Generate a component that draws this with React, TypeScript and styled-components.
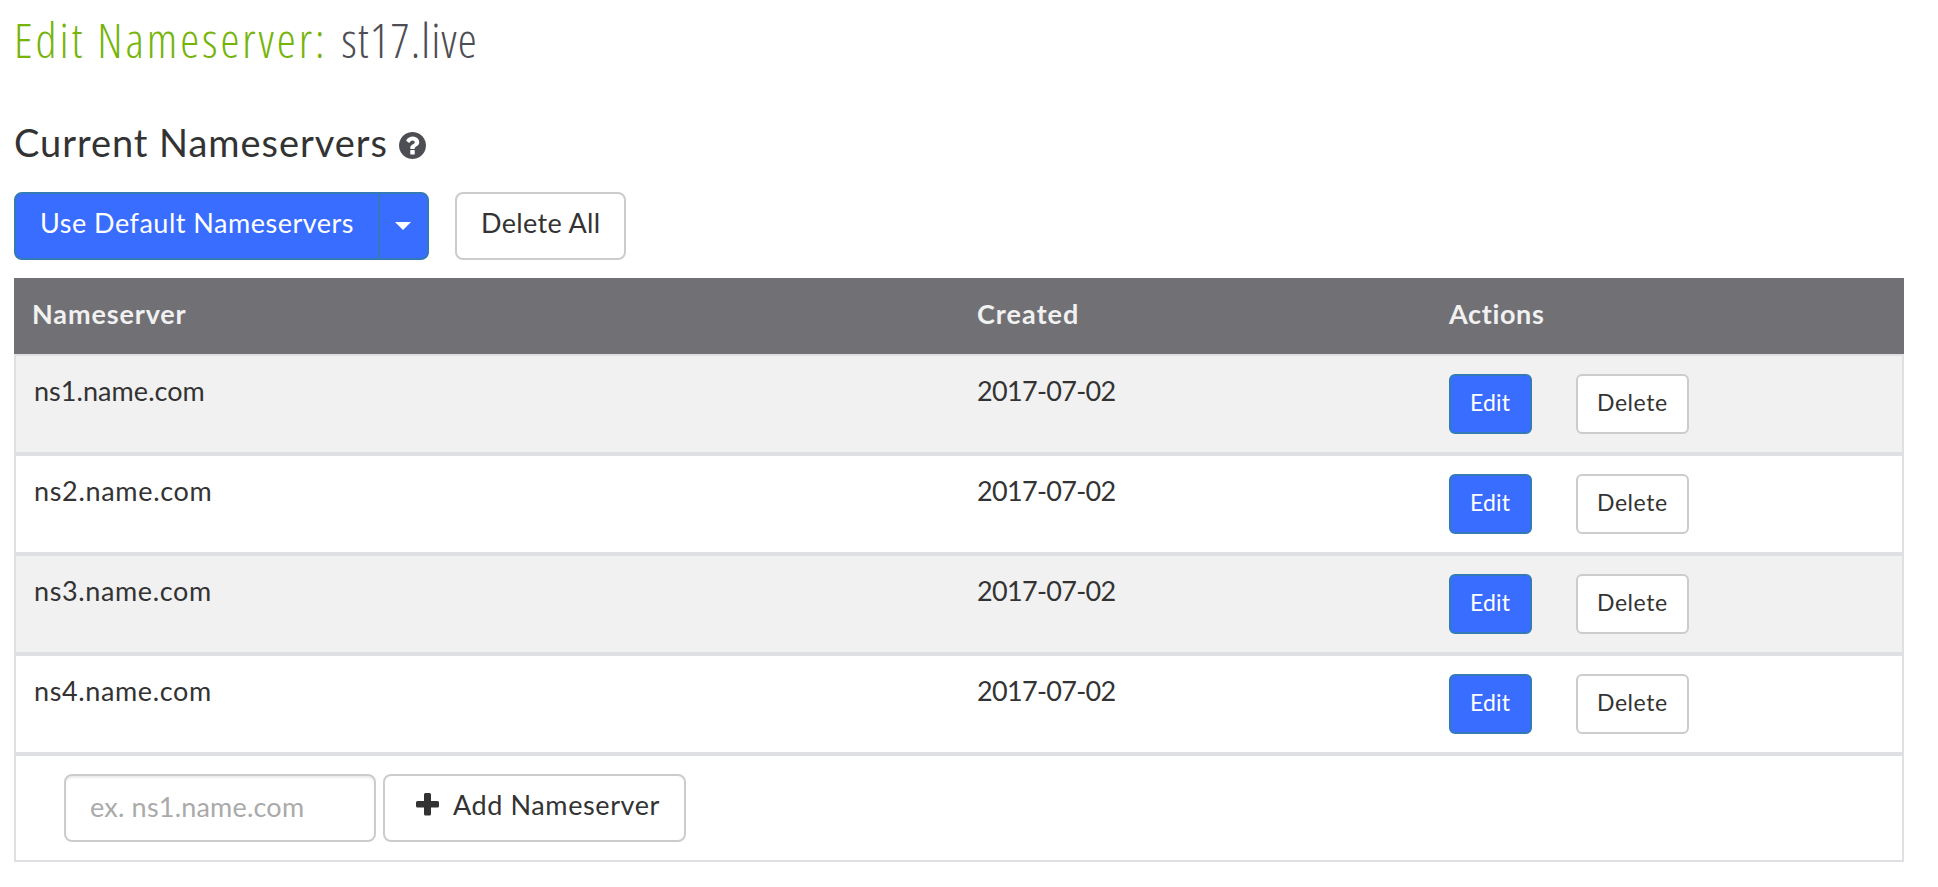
import React from 'react';
import styled, { createGlobalStyle } from 'styled-components';

const GlobalStyle = createGlobalStyle`
  *, *::before, *::after { box-sizing: border-box; }
  body {
    margin: 0;
    background: #fff;
    color: #333;
    font-family: Lato, "Liberation Sans", sans-serif;
    font-size: 27px;
    line-height: 40px;
  }
`;

const Page = styled.main`
  padding: 6px 34px 25px 14px;
`;

const Title = styled.h1`
  margin: 0;
  display: flex;
  gap: 14px;
  font-family: "Open Sans", "Liberation Sans", sans-serif;
  font-size: 48px;
  font-weight: 300;
  font-stretch: 75%;
  line-height: 68px;
  letter-spacing: 2.9px;
  color: #76b40a;
  white-space: nowrap;
`;

const Domain = styled.span`
  color: #4d4d54;
  letter-spacing: 1px;
`;

const Heading = styled.h2`
  margin: 43px 0 0;
  display: flex;
  gap: 11px;
  font-size: 38px;
  font-weight: 400;
  line-height: 50px;
  letter-spacing: 0.95px;
`;

const HelpIcon = styled.svg`
  width: 27px;
  height: 27px;
  margin-top: 15px;
  fill: #4d4d54;
`;

const Toolbar = styled.div`
  display: flex;
  margin: 25px 0 18px;
`;

const SplitButton = styled.div`
  display: flex;
  margin-right: 26px;
`;

const Button = styled.button<{ $primary?: boolean; $tracking?: number }>`
  display: flex;
  height: 68px;
  padding: 9px 25px 0;
  border: 2px solid ${p => (p.$primary ? '#337ab7' : '#ccc')};
  border-radius: 8px;
  background: ${p => (p.$primary ? '#396dff' : '#fff')};
  color: ${p => (p.$primary ? '#fff' : '#333')};
  font: inherit;
  letter-spacing: ${p => p.$tracking ?? 0}px;
  white-space: nowrap;
`;

const MainAction = styled(Button)`
  width: 366px;
  padding-left: 24px;
  border-radius: 8px 0 0 8px;
`;

const MenuToggle = styled(Button)`
  width: 51px;
  margin-left: -2px;
  padding: 28px 0 0 15px;
  border-radius: 0 8px 8px 0;
`;

const DeleteAll = styled(Button)`
  width: 171px;
  padding: 9px 0 0 24px;
`;

const Caret = styled.span`
  border: 8px solid transparent;
  border-top-color: #fff;
  border-bottom: 0;
`;

const SmallButton = styled(Button)<{ $width: number }>`
  width: ${p => p.$width}px;
  height: 60px;
  padding: 10px 0 0 19px;
  border-radius: 6px;
  font-size: 23px;
  line-height: 32px;
`;

const Table = styled.div`
  width: 1890px;
`;

const Columns = styled.div`
  display: grid;
  grid-template-columns: 945px 472px 1fr;
`;

const HeaderRow = styled(Columns)`
  height: 76px;
  padding: 16px 0 0 18px;
  background: #717075;
  color: #f1f1f1;
  font-weight: 700;
`;

const HeaderCell = styled.span<{ $tracking: number }>`
  letter-spacing: ${p => p.$tracking}px;
`;

const Row = styled(Columns)<{ $striped: boolean }>`
  height: 100px;
  padding-left: 18px;
  border: 2px solid #dfe0e3;
  background: ${p => (p.$striped ? '#f1f1f1' : '#fff')};
  grid-template-columns: 943px 472px 1fr;
`;

const Cell = styled.span<{ $tracking: number }>`
  padding-top: 15px;
  letter-spacing: ${p => p.$tracking}px;
`;

const Actions = styled.div`
  display: flex;
  gap: 44px;
  padding-top: 18px;
`;

const AddRow = styled.form`
  display: flex;
  gap: 7px;
  height: 108px;
  padding: 18px 0 0 48px;
  border: 2px solid #dfe0e3;
`;

const Input = styled.input`
  width: 312px;
  height: 68px;
  padding: 10px 24px 14px;
  border: 2px solid #ccc;
  border-radius: 8px;
  box-shadow: inset 0 2px 2px rgba(0, 0, 0, 0.075);
  background: #fff;
  color: #555;
  font: inherit;
  letter-spacing: 0.2px;
  outline: 0;

  &::placeholder {
    color: #aaa;
    opacity: 1;
  }
`;

const AddButton = styled(Button)`
  width: 303px;
  padding: 9px 0 0 31px;
  gap: 14px;
`;

const PlusIcon = styled.svg`
  width: 23px;
  height: 23px;
  margin-top: 8px;
  fill: #333;
`;

const nameservers = [
  { host: 'ns1.name.com', created: '2017-07-02', tracking: 0.05 },
  { host: 'ns2.name.com', created: '2017-07-02', tracking: 0.68 },
  { host: 'ns3.name.com', created: '2017-07-02', tracking: 0.62 },
  { host: 'ns4.name.com', created: '2017-07-02', tracking: 0.62 },
];

export default function App() {
  return (
    <Page>
      <GlobalStyle />
      <Title>
        <span>Edit Nameserver:</span>
        <Domain>st17.live</Domain>
      </Title>
      <Heading>
        <span>Current Nameservers</span>
        <HelpIcon viewBox="128 128 1536 1536" aria-label="Help">
          <path d="M1024 1376v-192q0-14-9-23t-23-9h-192q-14 0-23 9t-9 23v192q0 14 9 23t23 9h192q14 0 23-9t9-23zM1280 704q0-88-55.5-163t-138.5-116-170-41q-243 0-371 213-15 24 8 42l132 100q7 6 19 6 16 0 25-12 53-68 86-92 34-24 86-24 48 0 85.5 26t37.5 59q0 38-20 61t-68 45q-63 28-115.5 86.500t-52.500 125.500v36q0 14 9 23t23 9h192q14 0 23-9t9-23q0-19 21.500-49.500t54.500-49.500q32-18 49-28.500t46-35 44.500-48 28-60.500 12.500-81zM1664 896q0 209-103 385.500t-279.500 279.500-385.500 103-385.500-103-279.500-279.500-103-385.500 103-385.500 279.500-279.500 385.500-103 385.500 103 279.500 279.500 103 385.500z" />
        </HelpIcon>
      </Heading>
      <Toolbar>
        <SplitButton>
          <MainAction $primary $tracking={0.5}>Use Default Nameservers</MainAction>
          <MenuToggle $primary aria-label="More options">
            <Caret />
          </MenuToggle>
        </SplitButton>
        <DeleteAll $tracking={0.35}>Delete All</DeleteAll>
      </Toolbar>
      <Table>
        <HeaderRow>
          <HeaderCell $tracking={0.87}>Nameserver</HeaderCell>
          <HeaderCell $tracking={1.05}>Created</HeaderCell>
          <HeaderCell $tracking={0.65}>Actions</HeaderCell>
        </HeaderRow>
        {nameservers.map((ns, i) => (
          <Row key={ns.host} $striped={i % 2 === 0}>
            <Cell $tracking={ns.tracking}>{ns.host}</Cell>
            <Cell $tracking={-0.69}>{ns.created}</Cell>
            <Actions>
              <SmallButton $primary $width={83} $tracking={0.2}>Edit</SmallButton>
              <SmallButton $width={113} $tracking={0.56}>Delete</SmallButton>
            </Actions>
          </Row>
        ))}
        <AddRow>
          <Input placeholder="ex. ns1.name.com" />
          <AddButton type="button" $tracking={0.6}>
            <PlusIcon viewBox="0 0 23 23">
              <path d="M9.500 0h4a1.500 1.500 0 0 1 1.500 1.500V8h6.500A1.500 1.500 0 0 1 23 9.500v3.500a1.500 1.500 0 0 1-1.500 1.500H15V21a1.500 1.500 0 0 1-1.500 1.500h-4A1.500 1.500 0 0 1 8 21v-6.500H1.500A1.500 1.500 0 0 1 0 13V9.500A1.500 1.500 0 0 1 1.500 8H8V1.500A1.500 1.500 0 0 1 9.500 0z" />
            </PlusIcon>
            Add Nameserver
          </AddButton>
        </AddRow>
      </Table>
    </Page>
  );
}
